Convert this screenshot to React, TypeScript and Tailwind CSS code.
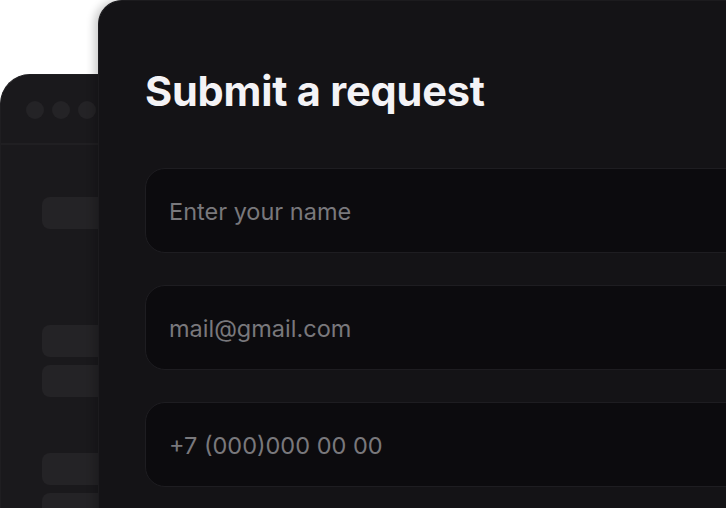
const fields = ["Enter your name", "mail@gmail.com", "+7 (000)000 00 00"]

function BackWindow() {
  return (
    <div className="absolute left-0 top-[74px] w-[200px] h-[480px] rounded-tl-[30px] bg-[#1a191c] border-l border-t border-[#1f1e21]">
      <div className="flex items-center gap-[8px] pl-[25px] pt-[2px] h-[70px] border-b-2 border-[#201f22]">
        <span className="w-[18px] h-[18px] rounded-full bg-[#242326]" />
        <span className="w-[18px] h-[18px] rounded-full bg-[#242326]" />
        <span className="w-[18px] h-[18px] rounded-full bg-[#242326]" />
      </div>
      <div className="pl-[41px] pt-[52px] flex flex-col">
        <div className="w-[120px] h-[32px] rounded-[8px] bg-[#242326]" />
        <div className="mt-[96px] w-[120px] h-[32px] rounded-[8px] bg-[#242326]" />
        <div className="mt-[8px] w-[120px] h-[32px] rounded-[8px] bg-[#242326]" />
        <div className="mt-[56px] w-[120px] h-[32px] rounded-[8px] bg-[#242326]" />
        <div className="mt-[8px] w-[120px] h-[32px] rounded-[8px] bg-[#242326]" />
      </div>
    </div>
  )
}

export default function App() {
  return (
    <div className="relative w-[726px] h-[508px] overflow-hidden bg-white font-['Inter',sans-serif]">
      <BackWindow />
      <div className="absolute left-[98px] top-0 w-[700px] h-[560px] rounded-tl-[24px] bg-[#141316] border-t border-l border-[#1c1b1e] shadow-[-4px_0_8px_rgba(0,0,0,0.2)] pl-[46px] pt-[66px]">
        <h1 className="text-[41.5px] leading-[48px] font-bold text-[#f4f3f6] tracking-[-0.005em]">Submit a request</h1>
        <div className="mt-[53px] flex flex-col gap-[32px]">
          {fields.map((f) => (
            <div
              key={f}
              className="h-[85px] rounded-[20px] bg-[#0c0b0e] border border-[#1e1d21] flex items-center pl-[23px] pt-[2px] text-[23.5px] text-[#79787c]"
            >
              {f}
            </div>
          ))}
        </div>
      </div>
    </div>
  )
}
